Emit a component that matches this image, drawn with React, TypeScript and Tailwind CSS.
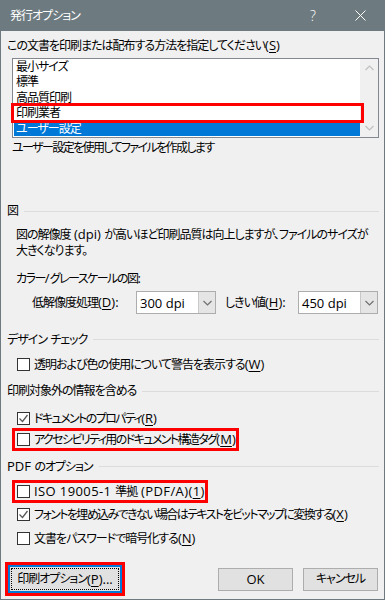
import React from "react";

const Chevron = ({ up = false, color = "#a0a0a0" }: { up?: boolean; color?: string }) => (
  <svg width="9" height="6" viewBox="0 0 9 6" className="block">
    <polyline
      points={up ? "0.5,5 4.5,1 8.5,5" : "0.5,1 4.5,5 8.5,1"}
      fill="none"
      stroke={color}
      strokeWidth="1.2"
    />
  </svg>
);

const Check = () => (
  <svg width="11" height="11" viewBox="0 0 11 11" className="block">
    <polyline points="1.5,5.5 4.5,8.5 9.5,2" fill="none" stroke="#5a5a5a" strokeWidth="1.3" />
  </svg>
);

const Box = ({ checked = false }: { checked?: boolean }) => (
  <div className="w-[13px] h-[13px] border border-[#333333] bg-white flex items-center justify-center shrink-0">
    {checked && <Check />}
  </div>
);

const U = ({ children }: { children: React.ReactNode }) => <span className="underline underline-offset-[2px]">{children}</span>;

const L = ({ children }: { children: React.ReactNode }) => (
  <span className="tracking-normal text-[13px] leading-[16px]">{children}</span>
);

const LW = ({ children }: { children: React.ReactNode }) => (
  <span className="tracking-[0.4px] text-[13px] leading-[16px]">{children}</span>
);

const Section = ({ children, className = "" }: { children: React.ReactNode; className?: string }) => (
  <div className={`flex items-center h-[16px] ${className}`}>
    <span className="whitespace-nowrap">{children}</span>
    <div className="flex-1 h-px bg-[#dcdcdc] ml-[6px]" />
  </div>
);

const CheckRow = ({
  checked = false,
  children,
  className = "",
  red = false,
  tight = false,
}: {
  checked?: boolean;
  children: React.ReactNode;
  className?: string;
  red?: boolean;
  tight?: boolean;
}) => (
  <div className={`relative flex ml-[10px] ${className}`}>
    <div className="relative inline-flex items-center h-[16px] gap-[4px]">
      <Box checked={checked} />
      <span className={`whitespace-nowrap ${tight ? "tracking-[-1.6px]" : ""}`}>{children}</span>
      {red && <div className="absolute left-[-5px] right-[-3px] top-[-3px] bottom-[-4px] border-[3px] border-[#ff0000]" />}
    </div>
  </div>
);

const Combo = ({ value }: { value: string }) => (
  <div className="w-[80px] h-[23px] border border-[#adadad] bg-white flex shrink-0">
    <div className="flex-1 flex items-center pl-[3px] text-[13px] tracking-normal">{value}</div>
    <div className="w-[17px] bg-[#e5e5e5] border-l border-[#c8c8c8] flex items-center justify-center">
      <Chevron color="#707070" />
    </div>
  </div>
);

export default function App() {
  return (
    <div className="w-[385px] h-[600px] bg-[#f0f0f0] border-x border-b border-[#6d7b80] flex flex-col text-[12px] tracking-[-1px] leading-[16px] text-black font-['Open_Sans','Noto_Sans_CJK_JP',sans-serif] [font-feature-settings:'palt'] overflow-hidden">
      {/* Title bar */}
      <div className="h-[31px] bg-[#6d7b80] flex items-center text-white shrink-0 -mx-px">
        <span className="ml-[10px]">発行オプション</span>
        <span className="ml-auto mr-[39px] text-[14px] font-light tracking-normal">?</span>
        <svg width="11" height="11" viewBox="0 0 11 11" className="mr-[19px]">
          <line x1="0.5" y1="0.5" x2="10.5" y2="10.5" stroke="white" strokeWidth="1" />
          <line x1="10.5" y1="0.5" x2="0.5" y2="10.5" stroke="white" strokeWidth="1" />
        </svg>
      </div>

      <div className="flex flex-col pl-[6px] pr-[5px]">
        <div className="mt-[6px] h-[16px] whitespace-nowrap">
          この文書を印刷または配布する方法を指定してください<L>(<U>S</U>)</L>
        </div>

        {/* List box */}
        <div className="mt-[5px] ml-[5px] h-[80px] border border-[#828790] bg-white flex">
          <div className="flex-1 flex flex-col pt-0 pl-px">
            <div className="h-[15.5px] pl-[2px] flex items-center">最小サイズ</div>
            <div className="h-[15.5px] pl-[2px] flex items-center">標準</div>
            <div className="h-[15.5px] pl-[2px] flex items-center">高品質印刷</div>
            <div className="relative h-[15.5px] pl-[2px] flex items-center">
              印刷業者
              <div className="absolute left-[-3px] right-[-4px] top-[-3px] bottom-[-2px] border-[3px] border-[#ff0000]" />
            </div>
            <div className="h-[15px] pl-[2px] flex items-center bg-[#0078d7] text-white">ユーザー設定</div>
          </div>
          <div className="w-[18px] bg-[#f0f0f0] flex flex-col items-center justify-between py-[6px]">
            <Chevron up color="#c0c0c0" />
            <Chevron color="#c0c0c0" />
          </div>
        </div>

        <div className="mt-[2px] ml-[5px] h-[16px] tracking-[-1.6px]">ユーザー設定を使用してファイルを作成します</div>

        <Section className="mt-[47px]">図</Section>

        <div className="mt-[7px] ml-[9px] whitespace-nowrap">
          図の解像度<L> (dpi) </L>が高いほど印刷品質は向上しますが、ファイルのサイズが
          <br />
          大きくなります。
        </div>

        <div className="mt-[11px] ml-[9px] h-[16px] tracking-[-1.5px]">
          カラー<L>/</L>グレースケールの図<L>:</L>
        </div>

        <div className="mt-[5px] flex items-center h-[23px]">
          <div className="ml-[25px] w-[104px] whitespace-nowrap">
            低解像度処理<L>(<U>D</U>):</L>
          </div>
          <Combo value="300 dpi" />
          <div className="ml-[9px] w-[73px] whitespace-nowrap">
            しきい値<L>(<U>H</U>):</L>
          </div>
          <Combo value="450 dpi" />
        </div>

        <Section className="mt-[17px]">
          デザイン<L> </L>チェック
        </Section>
        <CheckRow className="mt-[9px]">
          透明および色の使用について警告を表示する<L>(<U>W</U>)</L>
        </CheckRow>

        <Section className="mt-[11px]">印刷対象外の情報を含める</Section>
        <CheckRow checked tight className="mt-[11px]">
          ドキュメントのプロパティ<L>(<U>R</U>)</L>
        </CheckRow>
        <CheckRow red tight className="mt-[5px]">
          アクセシビリティ用のドキュメント構造タグ<L>(<U>M</U>)</L>
        </CheckRow>

        <Section className="mt-[11px]">
          <L>PDF </L>のオプション
        </Section>
        <CheckRow red className="mt-[9px]">
          <LW>ISO 19005-1 </LW>準拠<LW> (PDF/A)(<U>1</U>)</LW>
        </CheckRow>
        <CheckRow checked tight className="mt-[7px]">
          フォントを埋め込みできない場合はテキストをビットマップに変換する<L>(<U>X</U>)</L>
        </CheckRow>
        <CheckRow className="mt-[8px]">
          文書をパスワードで暗号化する<L>(<U>N</U>)</L>
        </CheckRow>

        {/* Buttons */}
        <div className="mt-[16px] flex items-center h-[34px]">
          <div className="-ml-[2px] border-[3px] border-[#ff0000] p-0">
            <div className="border-2 border-[#0078d7] bg-[#e1e1e1] h-[28px] w-[114px] flex items-center justify-center">
              <div className="border border-dotted border-black w-[108px] h-[22px] flex items-center justify-center whitespace-nowrap">
                印刷オプション<L>(<U>P</U>)...</L>
              </div>
            </div>
          </div>
          <div className="ml-auto w-[75px] h-[23px] border border-[#adadad] bg-[#e1e1e1] flex items-center justify-center text-[13px] tracking-normal">
            OK
          </div>
          <div className="ml-[10px] mr-px w-[75px] h-[23px] border border-[#adadad] bg-[#e1e1e1] flex items-center justify-center">
            キャンセル
          </div>
        </div>
      </div>
    </div>
  );
}
